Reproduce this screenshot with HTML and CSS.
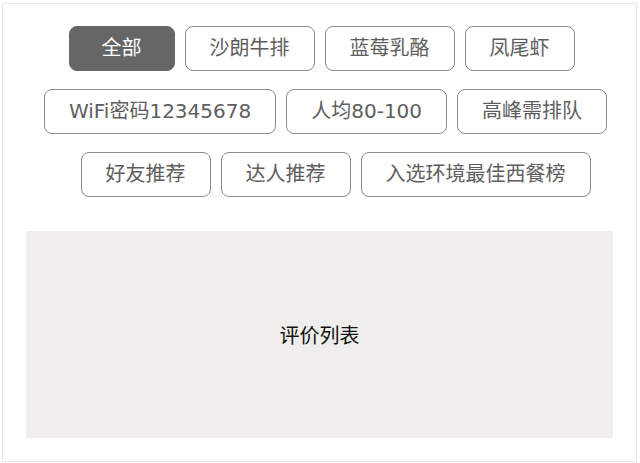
FILE: index.html
```html
<!DOCTYPE html>
<html lang="zh-CN">
<head>
    <meta charset="UTF-8">
    <meta name="viewport" content="width=device-width, initial-scale=1.0">
    <title>评价标签</title>
    <link rel="stylesheet" href="styles.css">
</head>
<body>
    <div class="panel">
        <div class="tags">
            <div class="row row-1">
                <span class="tag active">全部</span>
                <span class="tag">沙朗牛排</span>
                <span class="tag">蓝莓乳酪</span>
                <span class="tag">凤尾虾</span>
            </div>
            <div class="row row-2">
                <span class="tag">WiFi密码12345678</span>
                <span class="tag">人均80-100</span>
                <span class="tag">高峰需排队</span>
            </div>
            <div class="row row-3">
                <span class="tag">好友推荐</span>
                <span class="tag">达人推荐</span>
                <span class="tag">入选环境最佳西餐榜</span>
            </div>
        </div>
        <div class="list">评价列表</div>
    </div>
</body>
</html>
```

FILE: styles.css
```css
body {
    margin: 0;
    background: #fff;
    font-family: "Noto Sans CJK SC", "Noto Sans", sans-serif;
}
.panel {
    margin: 3px 0 0 2px;
    width: 633px;
    height: 457px;
    border: 1px solid #e8e8e8;
}
.tags {
    padding-top: 22px;
}
.row {
    display: flex;
    justify-content: center;
    gap: 10px;
    margin-bottom: 18px;
}
.row-1 {
    padding-left: 4px;
}
.row-2 {
    padding-left: 12px;
}
.row-3 {
    margin-bottom: 0;
    padding-left: 32px;
}
.tag {
    display: inline-block;
    height: 43px;
    line-height: 43px;
    padding: 0 24px;
    border: 1px solid #8a8a8a;
    border-radius: 8px;
    font-family: "DejaVu Sans", "Noto Sans CJK SC", sans-serif;
    font-size: 20px;
    color: #5e5e5e;
    text-align: center;
    white-space: nowrap;
}
.tag.active {
    min-width: 56px;
    background: #666;
    border-color: #666;
    color: #fff;
}
.list {
    display: flex;
    align-items: center;
    justify-content: center;
    margin: 34px 23px 0 23px;
    height: 207px;
    background: #efeeec;
    font-size: 20px;
    color: #111;
}
```
